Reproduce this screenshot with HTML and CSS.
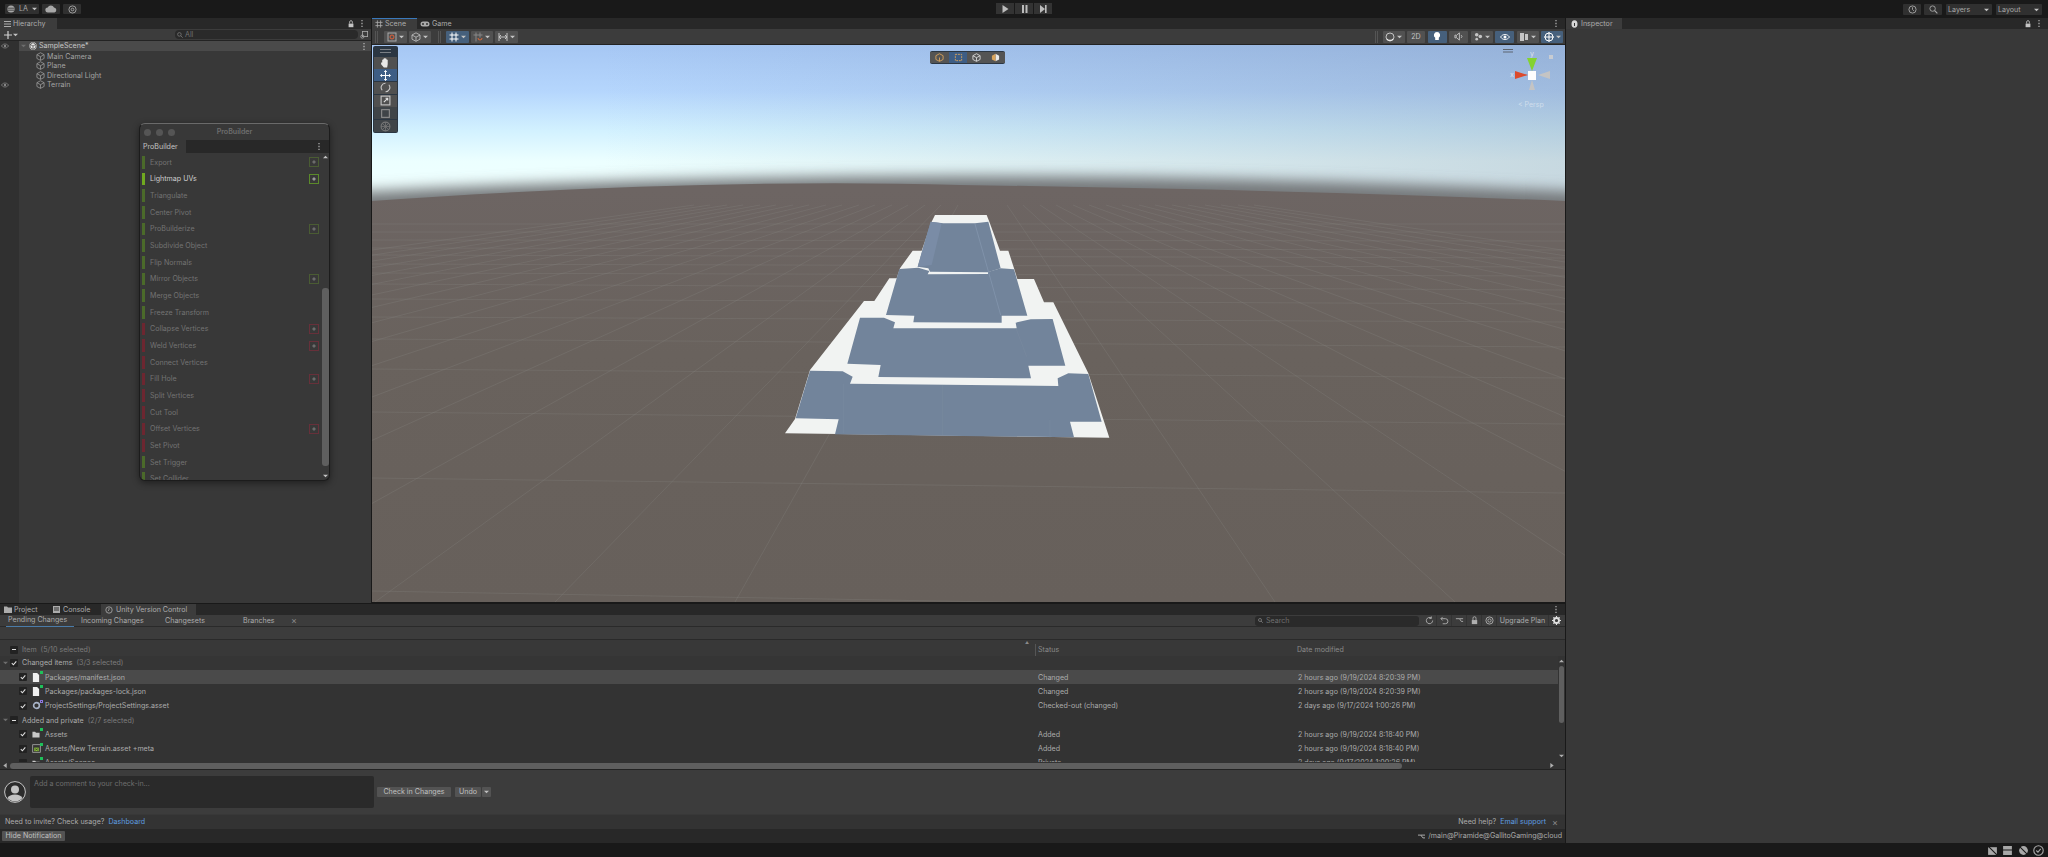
FILE: index.html
```html
<!DOCTYPE html>
<html lang="en">
<head>
    <meta charset="UTF-8">
    <title>SampleScene - Unity Editor</title>
    <link rel="stylesheet" href="styles.css">
</head>
<body>
    <svg class="defs" width="0" height="0">
        <symbol id="i-cube" viewBox="0 0 10 10"><path d="M5 .8 9 3v4.2L5 9.3 1 7.2V3zM1 3l4 2.2L9 3M5 5.2v4" fill="none" stroke="currentColor" stroke-width=".8"/></symbol>
        <symbol id="i-eye" viewBox="0 0 10 10"><path d="M.5 5C2 3 3.500 2.500 5 2.500S8 3 9.500 5C8 7 6.500 7.500 5 7.500S2 7 .5 5z" fill="none" stroke="currentColor" stroke-width=".9"/><circle cx="5" cy="5" r="1.500" fill="currentColor"/></symbol>
        <symbol id="i-lock" viewBox="0 0 10 10"><rect x="2" y="4.500" width="6" height="4.500" fill="currentColor"/><path d="M3.300 4.500V2.500a1.700 1.700 0 0 1 3.400 0v2" fill="none" stroke="currentColor"/></symbol>
        <symbol id="i-dots" viewBox="0 0 4 10"><path d="M2 1v1.400M2 4.300v1.400M2 7.600V9" stroke="currentColor" stroke-width="1.200"/></symbol>
        <symbol id="i-grid" viewBox="0 0 10 10"><path d="M3 .5v9M7 .5v9M.5 3h9M.5 7h9" stroke="currentColor" fill="none"/></symbol>
        <symbol id="i-check" viewBox="0 0 8 8"><path d="M1.800 4.200 3.400 5.800 6.300 2.300" fill="none" stroke="#e0e0e0" stroke-width="1.100"/></symbol>
        <symbol id="i-plus" viewBox="0 0 10 10"><path d="M5 2.800v4.400M2.800 5h4.400" stroke="currentColor"/></symbol>
        <symbol id="i-page" viewBox="0 0 9 10"><path d="M1 0h4.800L8 2.200V10H1z" fill="#f0f0f0"/></symbol>
        <symbol id="i-folder" viewBox="0 0 9 10"><path d="M.5 2h3l1 1h4v5.500h-8z" fill="#c8c8c8"/></symbol>
        <symbol id="i-gear" viewBox="0 0 10 10"><circle cx="5" cy="5" r="3.200" fill="none" stroke="#a9b4c8" stroke-width="1.800"/><circle cx="5" cy="5" r="1" fill="#333"/></symbol>
        <symbol id="i-terrain" viewBox="0 0 10 10"><rect x=".8" y=".8" width="8.400" height="8.400" fill="none" stroke="#b8b8b8" stroke-width=".8"/><rect x="2.500" y="4" width="5" height="4" fill="#8bbf3a"/><path d="m3.500 5 3 2M6.500 5l-3 2" stroke="#222" stroke-width=".6"/></symbol>
        <symbol id="i-caret" viewBox="0 0 6 4"><path d="M0 .5h6L3 3.500z" fill="currentColor"/></symbol>
    </svg>

    <header class="topbar">
        <div class="topbar-group">
            <button class="top-btn top-btn-account"><svg class="ico" width="8" height="8" viewBox="0 0 10 10"><circle cx="5" cy="5" r="4.500" fill="currentColor"/><path d="M1 4h8M1 6.500h8" stroke="#333"/></svg> LA <svg class="caret" width="5" height="4"><use href="#i-caret"/></svg></button>
            <button class="top-btn top-btn-cloud"><svg width="12" height="8" viewBox="0 0 12 8"><path d="M3 7.500a2.500 2.500 0 0 1-.3-5A3.400 3.400 0 0 1 9 2.600 2.500 2.500 0 0 1 9.500 7.500z" fill="currentColor"/></svg></button>
            <button class="top-btn top-btn-cloud"><svg width="9" height="9" viewBox="0 0 10 10"><circle cx="5" cy="5" r="4" fill="none" stroke="currentColor"/><circle cx="5" cy="5" r="1.500" fill="none" stroke="currentColor"/></svg></button>
        </div>
        <div class="play-group">
            <button class="play-btn"><svg width="7" height="8" viewBox="0 0 7 8"><path d="M.5 0 6.500 4 .5 8z" fill="currentColor"/></svg></button>
            <button class="play-btn"><svg width="7" height="8" viewBox="0 0 7 8"><path d="M1 0h2v8H1zM4.500 0h2v8h-2z" fill="currentColor"/></svg></button>
            <button class="play-btn"><svg width="7" height="8" viewBox="0 0 7 8"><path d="M0 0 5 4 0 8zM5 0h1.600v8H5z" fill="currentColor"/></svg></button>
        </div>
        <div class="topbar-group topbar-right">
            <button class="top-btn top-btn-square"><svg width="9" height="9" viewBox="0 0 10 10"><circle cx="5" cy="5" r="4" fill="none" stroke="currentColor"/><path d="M5 2.500V5l1.500 1.500" fill="none" stroke="currentColor"/></svg></button>
            <button class="top-btn top-btn-square"><svg width="9" height="9" viewBox="0 0 10 10"><circle cx="4" cy="4" r="3" fill="none" stroke="currentColor"/><path d="m6.300 6.300 3 3" stroke="currentColor" stroke-width="1.300"/></svg></button>
            <button class="top-btn top-btn-select">Layers <svg class="caret" width="5" height="4"><use href="#i-caret"/></svg></button>
            <button class="top-btn top-btn-select">Layout <svg class="caret" width="5" height="4"><use href="#i-caret"/></svg></button>
        </div>
    </header>

    <main class="workspace">
        <div class="left-col">
            <div class="upper">
                <!-- Hierarchy -->
                <section class="hierarchy">
                    <div class="tabstrip">
                        <div class="tab tab-active tab-hier"><svg width="7" height="6" viewBox="0 0 7 6"><path d="M0 .5h7M0 3h7M0 5.500h7" stroke="currentColor"/></svg> Hierarchy</div>
                        <div class="tab-tools"><svg width="8" height="8"><use href="#i-lock"/></svg><svg width="4" height="9"><use href="#i-dots"/></svg></div>
                    </div>
                    <div class="hier-toolbar">
                        <span class="hier-add"><svg width="8" height="8" viewBox="0 0 8 8"><path d="M4 0v8M0 4h8" stroke="#d0d0d0" stroke-width="1.200"/></svg><svg class="caret" width="5" height="4"><use href="#i-caret"/></svg></span>
                        <div class="hier-search"><svg width="6" height="6" viewBox="0 0 10 10"><circle cx="4" cy="4" r="3" fill="none" stroke="currentColor" stroke-width="1.500"/><path d="m6 6 3.500 3.500" stroke="currentColor" stroke-width="1.500"/></svg> All</div>
                        <span class="hier-find"><svg width="8" height="8" viewBox="0 0 10 10"><rect x="3" y=".5" width="6.500" height="6.500" fill="none" stroke="currentColor"/><circle cx="3" cy="7" r="2" fill="none" stroke="currentColor"/></svg></span>
                    </div>
                    <div class="hier-body">
                        <div class="hier-gutter">
                            <svg class="gutter-eye" width="8" height="8"><use href="#i-eye"/></svg>
                            <svg class="gutter-eye gutter-eye-off" width="8" height="8"><use href="#i-eye"/></svg>
                        </div>
                        <div class="hier-tree">
                            <div class="scene-row">
                                <svg class="fold" width="5" height="4"><use href="#i-caret"/></svg>
                                <svg width="8" height="8" viewBox="0 0 10 10"><circle cx="5" cy="5" r="4.600" fill="#e6e6e6"/><path d="M5 .8 8.600 3v4L5 9.200 1.400 7V3zM1.400 3 5 5l3.600-2M5 5v4" fill="none" stroke="#333" stroke-width=".8"/></svg>
                                <span>SampleScene*</span>
                                <svg class="scene-dots" width="4" height="9"><use href="#i-dots"/></svg>
                            </div>
                            <div class="tree-row"><svg width="9" height="9"><use href="#i-cube"/></svg>Main Camera</div>
                            <div class="tree-row"><svg width="9" height="9"><use href="#i-cube"/></svg>Plane</div>
                            <div class="tree-row"><svg width="9" height="9"><use href="#i-cube"/></svg>Directional Light</div>
                            <div class="tree-row"><svg width="9" height="9"><use href="#i-cube"/></svg>Terrain</div>
                        </div>
                    </div>

                    <!-- floating ProBuilder window -->
                    <div class="pb-window">
                        <div class="pb-title">
                            <span class="pb-light"></span><span class="pb-light"></span><span class="pb-light"></span>
                            <span class="pb-name">ProBuilder</span>
                        </div>
                        <div class="pb-tabs">
                            <div class="pb-tab">ProBuilder</div>
                            <svg width="4" height="9"><use href="#i-dots"/></svg>
                        </div>
                        <div class="pb-content">
                            <div class="pb-list">
                                <div class="pb-row pb-green">Export<span class="pb-more"><svg width="8" height="8"><use href="#i-plus"/></svg></span></div>
                                <div class="pb-row pb-green pb-on">Lightmap UVs<span class="pb-more"><svg width="8" height="8"><use href="#i-plus"/></svg></span></div>
                                <div class="pb-row pb-green">Triangulate</div>
                                <div class="pb-row pb-green">Center Pivot</div>
                                <div class="pb-row pb-green">ProBuilderize<span class="pb-more"><svg width="8" height="8"><use href="#i-plus"/></svg></span></div>
                                <div class="pb-row pb-green">Subdivide Object</div>
                                <div class="pb-row pb-green">Flip Normals</div>
                                <div class="pb-row pb-green">Mirror Objects<span class="pb-more"><svg width="8" height="8"><use href="#i-plus"/></svg></span></div>
                                <div class="pb-row pb-green">Merge Objects</div>
                                <div class="pb-row pb-green">Freeze Transform</div>
                                <div class="pb-row pb-red">Collapse Vertices<span class="pb-more"><svg width="8" height="8"><use href="#i-plus"/></svg></span></div>
                                <div class="pb-row pb-red">Weld Vertices<span class="pb-more"><svg width="8" height="8"><use href="#i-plus"/></svg></span></div>
                                <div class="pb-row pb-red">Connect Vertices</div>
                                <div class="pb-row pb-red">Fill Hole<span class="pb-more"><svg width="8" height="8"><use href="#i-plus"/></svg></span></div>
                                <div class="pb-row pb-red">Split Vertices</div>
                                <div class="pb-row pb-red">Cut Tool</div>
                                <div class="pb-row pb-red">Offset Vertices<span class="pb-more"><svg width="8" height="8"><use href="#i-plus"/></svg></span></div>
                                <div class="pb-row pb-red">Set Pivot</div>
                                <div class="pb-row pb-green">Set Trigger</div>
                                <div class="pb-row pb-green">Set Collider</div>
                            </div>
                            <div class="pb-scroll">
                                <svg class="pb-arrow" width="5" height="4"><use href="#i-caret"/></svg>
                                <div class="pb-thumb"></div>
                                <svg class="pb-arrow-down" width="5" height="4"><use href="#i-caret"/></svg>
                            </div>
                        </div>
                    </div>
                </section>

                <!-- Scene view -->
                <section class="scene">
                    <div class="tabstrip">
                        <div class="tab tab-active tab-scene"><svg width="8" height="8"><use href="#i-grid"/></svg> Scene</div>
                        <div class="tab tab-game"><svg width="10" height="6" viewBox="0 0 10 6"><rect x=".5" y=".5" width="9" height="5" rx="2.500" fill="currentColor"/><circle cx="3" cy="3" r="1" fill="#333"/><circle cx="7" cy="3" r="1" fill="#333"/></svg> Game</div>
                        <div class="tab-tools"><svg width="4" height="9"><use href="#i-dots"/></svg></div>
                    </div>
                    <div class="scene-toolbar">
                        <div class="tool-group">
                            <span class="grip"></span>
                            <span class="tb-btn tb-wide"><svg width="10" height="10" viewBox="0 0 10 10"><rect x="1" y="1" width="8" height="8" fill="none" stroke="#aaa"/><circle cx="5" cy="5" r="2" fill="none" stroke="#e0603a"/></svg><svg class="caret" width="5" height="4"><use href="#i-caret"/></svg></span>
                            <span class="tb-btn tb-wide"><svg width="10" height="10"><use href="#i-cube"/></svg><svg class="caret" width="5" height="4"><use href="#i-caret"/></svg></span>
                            <span class="grip grip-mid"></span>
                            <span class="tb-btn tb-wide tb-on"><svg width="10" height="10"><use href="#i-grid"/></svg><svg class="caret" width="5" height="4"><use href="#i-caret"/></svg></span>
                            <span class="tb-btn tb-wide"><svg width="10" height="10" viewBox="0 0 10 10"><path d="M3 .5v9M7 .5v5M.5 3h9" stroke="#888" fill="none"/><path d="M5 6a2 2 0 0 0 4 0" stroke="#d8693a" fill="none"/></svg><svg class="caret" width="5" height="4"><use href="#i-caret"/></svg></span>
                            <span class="tb-btn tb-wide"><svg width="10" height="10" viewBox="0 0 10 10"><path d="M1 1v8M9 1v8M1 5h8M3 3l-2 2 2 2M7 3l2 2-2 2" stroke="currentColor" fill="none"/></svg><svg class="caret" width="5" height="4"><use href="#i-caret"/></svg></span>
                        </div>
                        <div class="tool-group tool-group-right">
                            <span class="grip"></span>
                            <span class="tb-btn tb-w22"><svg width="10" height="10" viewBox="0 0 10 10"><circle cx="5" cy="5" r="4" fill="none" stroke="currentColor"/><path d="M2 7a4 4 0 0 0 6 0" fill="none" stroke="#fff"/></svg><svg class="caret" width="5" height="4"><use href="#i-caret"/></svg></span>
                            <span class="tb-btn tb-w18">2D</span>
                            <span class="tb-btn tb-w19 tb-on"><svg width="8" height="10" viewBox="0 0 8 10"><path d="M4 0a3.200 3.200 0 0 1 1.800 5.800V8H2.200V5.800A3.200 3.200 0 0 1 4 0z" fill="#fff"/></svg></span>
                            <span class="tb-btn tb-w19"><svg width="9" height="9" viewBox="0 0 10 10"><path d="M1 3.500h1.500v3H1zM3 3.500 6 1v8L3 6.500M8 3.500a2 2 0 0 1 0 3" fill="none" stroke="currentColor"/></svg></span>
                            <span class="tb-btn tb-w22"><svg width="9" height="9" viewBox="0 0 10 10"><circle cx="3" cy="3" r="2" fill="currentColor"/><circle cx="7" cy="5" r="2" fill="currentColor"/><circle cx="3" cy="8" r="1.500" fill="currentColor"/></svg><svg class="caret" width="5" height="4"><use href="#i-caret"/></svg></span>
                            <span class="tb-btn tb-w19 tb-on"><svg width="10" height="10"><use href="#i-eye"/></svg></span>
                            <span class="tb-btn tb-w22"><svg width="9" height="8" viewBox="0 0 9 8"><rect width="4" height="8" fill="currentColor"/><rect x="5" y="1" width="3" height="6" fill="currentColor"/></svg><svg class="caret" width="5" height="4"><use href="#i-caret"/></svg></span>
                            <span class="tb-btn tb-w22 tb-on"><svg width="10" height="10" viewBox="0 0 10 10"><circle cx="5" cy="5" r="4" fill="none" stroke="#fff"/><path d="M5 0v10M0 5h10" stroke="#fff"/></svg><svg class="caret" width="5" height="4"><use href="#i-caret"/></svg></span>
                        </div>
                    </div>
                    <div class="viewport">
                        <svg class="world" viewBox="372 45 1193 557" width="1193" height="557">
                            <defs>
                                <linearGradient id="sky" gradientUnits="userSpaceOnUse" x1="0" y1="45" x2="0" y2="200">
                                    <stop offset="0" stop-color="#a6c7f4"/>
                                    <stop offset=".3" stop-color="#b5d6fd"/>
                                    <stop offset=".55" stop-color="#d2f1ff"/>
                                    <stop offset=".75" stop-color="#ecffff"/>
                                    <stop offset="1" stop-color="#f0ffff"/>
                                </linearGradient>
                                <linearGradient id="skyshade" gradientUnits="userSpaceOnUse" x1="600" y1="0" x2="1565" y2="0">
                                    <stop offset="0" stop-color="#6f7f99" stop-opacity="0"/>
                                    <stop offset="1" stop-color="#6f7f99" stop-opacity=".3"/>
                                </linearGradient>
                                <linearGradient id="ground" gradientUnits="userSpaceOnUse" x1="0" y1="190" x2="0" y2="602">
                                    <stop offset="0" stop-color="#6d6563"/>
                                    <stop offset=".4" stop-color="#69625d"/>
                                    <stop offset="1" stop-color="#67605b"/>
                                </linearGradient>
                                <filter id="haze" filterUnits="userSpaceOnUse" x="300" y="100" width="1400" height="200">
                                    <feGaussianBlur stdDeviation="7"/>
                                </filter>
                            </defs>
                            <rect x="372" y="45" width="1193" height="557" fill="url(#sky)"/>
                            <rect x="372" y="45" width="1193" height="200" fill="url(#skyshade)"/>
                            <path d="M300 195Q960 157 1640 195V260H300z" fill="#74787a" filter="url(#haze)"/>
                            <path d="M372 201Q700 178 960 185 1300 190 1565 201V602H372z" fill="url(#ground)"/>
                            <!-- ground grid -->
                            <g class="grid-lines">
                                <path d="M925 205 375 602M908 205 195 602M892 205 15 602M875 205-165 602M859 205-345 602M842 205-525 602M826 205-705 602M809 205-885 602M793 205-1065 602M776 205-1245 602M760 205-1425 602M743 205-1605 602M727 205-1785 602M710 205-1965 602M694 205-2145 602"/>
                                <path d="M941 205 555 602M958 205 735 602M1007 205 1275 602M1023 205 1455 602M1040 205 1635 602M1056 205 1815 602M1073 205 1995 602M1089 205 2175 602M1106 205 2355 602M1122 205 2535 602M1139 205 2715 602M1155 205 2895 602M1172 205 3075 602M1188 205 3255 602M1205 205 3435 602M1221 205 3615 602M1238 205 3795 602M1254 205 3975 602"/>
                                <path d="M372 591 1565 612M372 478 1565 493M372 412 1565 424M372 369 1565 378M372 339 1565 347M372 317 1565 322M372 299 1565 304M372 284 1565 290M372 273 1565 276M372 264 1565 267M372 255 1565 258M372 248 1565 250M372 240 1565 241M372 232 1565 232M372 224 1565 224"/>
                            </g>
                            <!-- terrain steps -->
                            <g transform="translate(760 200) scale(.33333)">
                                <polygon class="m-white" points="525,45 680,45 688,65 720,152 745,152 762,205 772,237 822,237 852,307 880,307 985,520 1048,713 75,700 105,657 150,510 312,303 343,303 388,235 410,235 420,205 458,152 485,152 515,65"/>
                                <polygon class="m-blue" points="150,512 248,514 278,530 270,551 895,558 893,535 925,520 985,522 1025,665 930,665 942,712 225,703 236,658 107,655"/>
                                <polygon class="m-blue" points="300,353 372,353 405,367 400,385 770,385 767,368 812,358 878,357 916,497 805,497 813,535 355,531 362,495 262,491"/>
                                <polygon class="m-blue" points="418,207 475,203 508,213 503,223 684,222 684,216 722,205 762,208 802,347 725,347 725,368 460,367 463,347 378,345"/>
                                <polygon class="m-blue" points="512,65 550,70 645,70 685,65 722,205 684,217 510,215 505,205 473,200"/>
                                <polygon class="m-light" points="512,65 545,70 515,195 473,200"/>
                                <path class="m-seam" d="M645 72 722 345"/>
                                <path class="m-seam-faint" d="M768 385 800 470M250 551V700M548 555V705M870 660V712"/>
                            </g>
                            <!-- scene gizmo -->
                            <g class="gizmo">
                                <path class="giz-handle" d="M1503 49.500h10M1503 52h10"/>
                                <polygon points="1527,58 1537,58 1532,71" fill="#84d22f"/>
                                <polygon points="1515,71 1515,79 1528,75" fill="#dc4a2c"/>
                                <polygon points="1550,71 1550,79 1538,75" fill="#c4c4c4"/>
                                <polygon points="1529,90 1535,90 1532,80" fill="#c4c4c4"/>
                                <rect x="1528" y="71" width="8" height="9" fill="#fdfdfd"/>
                                <rect x="1549" y="55" width="4" height="4" fill="#c8ccd2"/>
                            </g>
                        </svg>
                        <div class="gizmo-label gizmo-y">y</div>
                        <div class="gizmo-label gizmo-x">x</div>
                        <div class="gizmo-label gizmo-persp">&lt; Persp</div>

                        <div class="tools-overlay">
                            <div class="overlay-grip"></div>
                            <div class="tool-btn"><svg width="11" height="11" viewBox="0 0 10 10"><path d="M2 5V2.500h1V4V1.500h1V4V1h1v3V1.500h1V4V2.500h1V6.500L6.500 9.500h-3L1 6.500V5z" fill="#e8e8e8"/></svg></div>
                            <div class="tool-btn tool-on"><svg width="11" height="11" viewBox="0 0 10 10"><path d="M5 .5v9M.5 5h9M3.800 1.800 5 .5l1.200 1.300M3.800 8.200 5 9.500l1.200-1.300M1.800 3.800.5 5l1.300 1.200M8.200 3.800 9.500 5 8.200 6.200" fill="none" stroke="#fff" stroke-width=".9"/></svg></div>
                            <div class="tool-btn"><svg width="11" height="11" viewBox="0 0 10 10"><path d="M2 7.500A3.800 3.800 0 0 1 5 1.200M8 2.500A3.800 3.800 0 0 1 5 8.800" fill="none" stroke="#c8c8c8"/></svg></div>
                            <div class="tool-btn"><svg width="11" height="11" viewBox="0 0 10 10"><rect x="1" y="1" width="8" height="8" fill="none" stroke="#c8c8c8"/><path d="M3.500 6.500 7 3M5 3h2v2" fill="none" stroke="#e0e0e0"/></svg></div>
                            <div class="tool-btn tool-off"><svg width="11" height="11" viewBox="0 0 10 10"><rect x="1.500" y="1.500" width="7" height="7" fill="none" stroke="#8e8e8e"/></svg></div>
                            <div class="tool-btn tool-off"><svg width="11" height="11" viewBox="0 0 10 10"><circle cx="5" cy="5" r="4" fill="none" stroke="#777"/><path d="M1 5h8M5 1v8M2 2l6 6M8 2 2 8" stroke="#777" stroke-width=".7"/></svg></div>
                        </div>

                        <div class="orient-overlay">
                            <div class="orient-btn"><svg width="9" height="9" viewBox="0 0 10 10"><path d="M5 .8 9 3v4.200L5 9.300 1 7.200V3zM5 5v4" fill="none" stroke="#d9a45c"/></svg></div>
                            <div class="orient-btn orient-on"><svg width="9" height="9" viewBox="0 0 10 10"><rect x="1.500" y="1.500" width="7" height="7" fill="none" stroke="#d9a45c" stroke-dasharray="2 1"/></svg></div>
                            <div class="orient-btn"><svg width="9" height="9" viewBox="0 0 10 10"><path d="M5 .8 9 3v4.200L5 9.300 1 7.200V3zM1 3l4 2.200L9 3M5 5v4" fill="none" stroke="#d8d8d8"/></svg></div>
                            <div class="orient-btn"><svg width="9" height="9" viewBox="0 0 10 10"><path d="M5 .8 9 3v4.200L5 9.300z" fill="#e8e8e8"/><path d="M5 .8 1 3v4.200l4 2.100z" fill="#d9a45c"/></svg></div>
                        </div>
                    </div>
                </section>
            </div>

            <!-- Version control panel -->
            <section class="vc-panel">
                <div class="tabstrip">
                    <div class="tab tab-project"><svg width="8" height="7" viewBox="0 0 8 7"><path d="M0 .5h3l1 1h4V7H0z" fill="currentColor"/></svg> Project</div>
                    <div class="tab tab-console"><svg width="7" height="7" viewBox="0 0 7 7"><rect width="7" height="7" fill="currentColor"/><path d="M1 2h5M1 4h5" stroke="#333"/></svg> Console</div>
                    <div class="tab tab-active tab-uvc"><svg width="8" height="8" viewBox="0 0 10 10"><circle cx="5" cy="5" r="4" fill="none" stroke="currentColor"/><path d="M5 2.500V5L3.500 6.500" fill="none" stroke="currentColor"/></svg> Unity Version Control</div>
                    <div class="tab-tools"><svg width="4" height="9"><use href="#i-dots"/></svg></div>
                </div>
                <div class="vc-subtabs">
                    <div class="subtab subtab-active">Pending Changes</div>
                    <div class="subtab subtab-incoming">Incoming Changes</div>
                    <div class="subtab subtab-changesets">Changesets</div>
                    <div class="subtab subtab-branches">Branches</div>
                    <div class="subtab-close">&times;</div>
                    <div class="vc-tools">
                        <div class="vc-search"><svg width="5" height="5" viewBox="0 0 10 10"><circle cx="4" cy="4" r="3" fill="none" stroke="currentColor" stroke-width="2"/><path d="m6 6 3.500 3.500" stroke="currentColor" stroke-width="2"/></svg> Search</div>
                        <span class="vc-icon"><svg width="9" height="9" viewBox="0 0 10 10"><path d="M8.500 5A3.500 3.500 0 1 1 7 2.200M7 .5v2.200H4.800" fill="none" stroke="currentColor"/></svg></span>
                        <span class="vc-icon"><svg width="9" height="9" viewBox="0 0 10 10"><path d="M3 1 1 3l2 2M1 3h5a2.800 2.800 0 0 1 0 5.600H3" fill="none" stroke="currentColor"/></svg></span>
                        <span class="vc-icon"><svg width="9" height="9" viewBox="0 0 10 10"><path d="M1 3h4l2 3h2M5 3h4" fill="none" stroke="currentColor"/></svg></span>
                        <span class="vc-icon"><svg width="9" height="9"><use href="#i-lock"/></svg></span>
                        <span class="vc-icon"><svg width="9" height="9" viewBox="0 0 10 10"><circle cx="5" cy="5" r="4" fill="none" stroke="currentColor"/><circle cx="5" cy="5" r="1.800" fill="none" stroke="currentColor"/></svg></span>
                        <span class="vc-upgrade">Upgrade Plan</span>
                        <span class="vc-icon vc-gear"><svg width="9" height="9" viewBox="0 0 10 10"><circle cx="5" cy="5" r="2.800" fill="none" stroke="#e0e0e0" stroke-width="2"/><path d="M5 0v2M5 8v2M0 5h2M8 5h2M1.500 1.500 3 3M7 7l1.500 1.500M8.500 1.500 7 3M3 7 1.500 8.500" stroke="#e0e0e0" stroke-width="1.200"/></svg></span>
                    </div>
                </div>
                <div class="vc-band"></div>
                <div class="vc-head">
                    <div class="cell-name"><span class="cb cb-head"><i class="cb-dash"></i></span><span class="dim">Item&nbsp; (5/10 selected)</span></div>
                    <div class="cell-status"><span class="sort-mark">&#9650;</span>Status</div>
                    <div class="cell-date">Date modified</div>
                </div>
                <div class="vc-table">
                    <div class="vc-rows">
                        <div class="vc-row vc-group">
                            <div class="cell-name"><svg class="fold" width="5" height="4"><use href="#i-caret"/></svg><span class="cb"><svg width="8" height="8"><use href="#i-check"/></svg></span><span>Changed items</span><span class="dim">&nbsp; (3/3 selected)</span></div>
                        </div>
                        <div class="vc-row vc-item vc-selected">
                            <div class="cell-name"><span class="cb"><svg width="8" height="8"><use href="#i-check"/></svg></span><span class="file-ico"><svg width="8" height="9"><use href="#i-page"/></svg><i class="badge"></i></span>Packages/manifest.json</div>
                            <div class="cell-status">Changed</div>
                            <div class="cell-date">2 hours ago (9/19/2024 8:20:39 PM)</div>
                        </div>
                        <div class="vc-row vc-item">
                            <div class="cell-name"><span class="cb"><svg width="8" height="8"><use href="#i-check"/></svg></span><span class="file-ico"><svg width="8" height="9"><use href="#i-page"/></svg><i class="badge"></i></span>Packages/packages-lock.json</div>
                            <div class="cell-status">Changed</div>
                            <div class="cell-date">2 hours ago (9/19/2024 8:20:39 PM)</div>
                        </div>
                        <div class="vc-row vc-item">
                            <div class="cell-name"><span class="cb"><svg width="8" height="8"><use href="#i-check"/></svg></span><span class="file-ico"><svg width="9" height="9"><use href="#i-gear"/></svg><i class="badge badge-purple"></i></span>ProjectSettings/ProjectSettings.asset</div>
                            <div class="cell-status">Checked-out (changed)</div>
                            <div class="cell-date">2 days ago (9/17/2024 1:00:26 PM)</div>
                        </div>
                        <div class="vc-row vc-group vc-group-plain">
                            <div class="cell-name"><svg class="fold" width="5" height="4"><use href="#i-caret"/></svg><span class="cb"><i class="cb-dash"></i></span><span>Added and private</span><span class="dim">&nbsp; (2/7 selected)</span></div>
                        </div>
                        <div class="vc-row vc-item">
                            <div class="cell-name"><span class="cb"><svg width="8" height="8"><use href="#i-check"/></svg></span><span class="file-ico"><svg width="8" height="9"><use href="#i-folder"/></svg><i class="badge"></i></span>Assets</div>
                            <div class="cell-status">Added</div>
                            <div class="cell-date">2 hours ago (9/19/2024 8:18:40 PM)</div>
                        </div>
                        <div class="vc-row vc-item">
                            <div class="cell-name"><span class="cb"><svg width="8" height="8"><use href="#i-check"/></svg></span><span class="file-ico"><svg width="9" height="9"><use href="#i-terrain"/></svg><i class="badge"></i></span>Assets/New Terrain.asset +meta</div>
                            <div class="cell-status">Added</div>
                            <div class="cell-date">2 hours ago (9/19/2024 8:18:40 PM)</div>
                        </div>
                        <div class="vc-row vc-item">
                            <div class="cell-name"><span class="cb"></span><span class="file-ico"><svg width="8" height="9"><use href="#i-folder"/></svg><i class="badge"></i></span>Assets/Scenes</div>
                            <div class="cell-status">Private</div>
                            <div class="cell-date">2 days ago (9/17/2024 1:00:26 PM)</div>
                        </div>
                    </div>
                    <div class="vscroll">
                        <svg class="vs-up" width="5" height="4"><use href="#i-caret"/></svg>
                        <div class="vs-thumb"></div>
                        <svg class="vs-down" width="5" height="4"><use href="#i-caret"/></svg>
                    </div>
                </div>
                <div class="hscroll">
                    <svg class="hs-left" width="4" height="5" viewBox="0 0 4 6"><path d="M4 0v6L0 3z" fill="currentColor"/></svg>
                    <div class="hs-thumb"></div>
                    <svg class="hs-right" width="4" height="5" viewBox="0 0 4 6"><path d="M0 0v6l4-3z" fill="currentColor"/></svg>
                </div>
                <div class="vc-comment">
                    <svg class="avatar" width="22" height="22" viewBox="0 0 22 22"><circle cx="11" cy="11" r="10.400" fill="#2c2c2c" stroke="#c4c4c4"/><circle cx="11" cy="8.500" r="4" fill="#c4c4c4"/><path d="M3.500 17a8 5.500 0 0 1 15 0 10 10 0 0 1-15 0z" fill="#c4c4c4"/></svg>
                    <div class="comment-box">Add a comment to your check-in...</div>
                    <button class="vc-btn vc-btn-checkin">Check in Changes</button>
                    <button class="vc-btn vc-btn-undo">Undo</button>
                    <button class="vc-btn vc-btn-more"><svg width="5" height="4"><use href="#i-caret"/></svg></button>
                </div>
                <div class="vc-notice">
                    <span>Need to invite? Check usage?</span>
                    <span class="link link-dash">Dashboard</span>
                    <span class="notice-right">Need help?</span>
                    <span class="link link-mail">Email support</span>
                    <span class="notice-close">&times;</span>
                </div>
                <div class="vc-footer">
                    <button class="vc-btn vc-btn-hide">Hide Notification</button>
                    <span class="branch"><svg width="7" height="7" viewBox="0 0 10 10"><path d="M0 3h4l3 4h3M4 3h6" fill="none" stroke="currentColor" stroke-width="1.400"/></svg> /main@Piramide@GallitoGaming@cloud</span>
                </div>
            </section>
        </div>

        <!-- Inspector -->
        <section class="inspector">
            <div class="tabstrip">
                <div class="tab tab-active tab-inspector"><svg width="7" height="8" viewBox="0 0 7 8"><ellipse cx="3.500" cy="4" rx="3" ry="3.800" fill="#d8d8d8"/><rect x="3" y="3" width="1" height="3" fill="#333"/></svg> Inspector</div>
                <div class="tab-tools"><svg width="8" height="8"><use href="#i-lock"/></svg><svg width="4" height="9"><use href="#i-dots"/></svg></div>
            </div>
        </section>
    </main>

    <footer class="statusbar">
        <svg width="11" height="11" viewBox="0 0 10 10"><path d="M1 2h8v7H1z" fill="#a8a8a8"/><path d="m1 1 8 8" stroke="#191919"/></svg>
        <svg width="11" height="11" viewBox="0 0 10 10"><path d="M1 1h8v3H1zM1 5h8v4H1z" fill="#a8a8a8"/></svg>
        <svg width="11" height="11" viewBox="0 0 10 10"><circle cx="5" cy="5" r="4" fill="#a8a8a8"/><path d="m1 1 8 8" stroke="#191919"/></svg>
        <svg width="11" height="11" viewBox="0 0 10 10"><circle cx="5" cy="5" r="4.300" fill="none" stroke="#a8a8a8"/><path d="m3 5 1.500 1.500L7 3.500" fill="none" stroke="#a8a8a8"/></svg>
    </footer>
</body>
</html>
```

FILE: styles.css
```css
/* Unity editor layout, dark theme */
* {
    margin: 0;
    padding: 0;
    box-sizing: border-box;
}

html, body {
    height: 857px;
    overflow: hidden;
}

body {
    display: flex;
    flex-direction: column;
    background-color: #191919;
    color: #acacac;
    font-family: 'Inter', 'Roboto', sans-serif;
    font-size: 7.1px;
    line-height: 1;
}

button {
    font: inherit;
    color: inherit;
    border: none;
}

svg {
    display: block;
    flex: none;
}

.defs {
    position: absolute;
}

.caret {
    color: #c4c4c4;
}

/* top toolbar */
.topbar {
    height: 18px;
    flex: none;
    display: flex;
    justify-content: space-between;
    align-items: flex-start;
    padding: 4px 6px 0 5px;
    position: relative;
}

.topbar-group {
    display: flex;
    gap: 3px;
}

.top-btn {
    height: 10px;
    display: flex;
    align-items: center;
    justify-content: center;
    gap: 4px;
    background-color: #303030;
    color: #a8a8a8;
    border-radius: 1px;
}

.top-btn-account {
    width: 34px;
}

.top-btn-cloud {
    width: 18px;
}

.top-btn-square {
    width: 18px;
    height: 11px;
}

.top-btn-select {
    width: 46px;
    height: 11px;
    justify-content: space-between;
    padding: 0 3px 0 2px;
    margin-left: 1px;
}

.topbar-right {
    gap: 3px;
}

.play-group {
    position: absolute;
    left: 996px;
    top: 3px;
    display: flex;
    gap: 1px;
}

.play-btn {
    width: 18px;
    height: 11px;
    display: flex;
    align-items: center;
    justify-content: center;
    background-color: #333;
    color: #bcbcbc;
}

/* panels */
.workspace {
    flex: 1;
    display: flex;
    min-height: 0;
}

.left-col {
    width: 1565px;
    display: flex;
    flex-direction: column;
    gap: 1px;
}

.upper {
    height: 585px;
    display: flex;
    gap: 1px;
}

.tabstrip {
    height: 11px;
    flex: none;
    display: flex;
    align-items: stretch;
    background-color: #282828;
    position: relative;
}

.tab {
    display: flex;
    align-items: center;
    gap: 2px;
    padding-left: 4px;
    color: #acacac;
}

.tab-active {
    background-color: #3c3c3c;
}

.tab-tools {
    margin-left: auto;
    display: flex;
    align-items: center;
    gap: 5px;
    padding-right: 7px;
    color: #c4c4c4;
}

/* hierarchy */
.hierarchy {
    width: 371px;
    display: flex;
    flex-direction: column;
    background-color: #383838;
    position: relative;
}

.tab-hier {
    width: 57px;
}

.hier-toolbar {
    height: 12px;
    flex: none;
    display: flex;
    align-items: center;
    background-color: #3c3c3c;
    border-bottom: 1px solid #232323;
    padding-left: 4px;
}

.hier-add {
    display: flex;
    align-items: center;
    gap: 1px;
    width: 171px;
}

.hier-search {
    width: 183px;
    height: 9px;
    display: flex;
    align-items: center;
    gap: 2px;
    padding-left: 2px;
    background-color: #2a2a2a;
    border-radius: 4px;
    color: #707070;
}

.hier-find {
    margin-left: 2px;
    color: #acacac;
}

.hier-body {
    flex: 1;
    display: flex;
}

.hier-gutter {
    width: 19px;
    background-color: #303030;
    position: relative;
    color: #888;
}

.gutter-eye {
    position: absolute;
    left: 1px;
    top: 1px;
}

.gutter-eye-off {
    top: 40px;
}

.hier-tree {
    flex: 1;
}

.scene-row {
    height: 10px;
    display: flex;
    align-items: center;
    gap: 2px;
    padding-left: 2px;
    background-color: #4a4a4a;
    color: #c8c8c8;
    margin-left: -1px;
    margin-bottom: .5px;
}

.fold {
    color: #6e6e6e;
}

.scene-row .fold {
    margin-right: 1px;
    margin-left: 1px;
}

.scene-dots {
    margin-left: auto;
    margin-right: 5px;
}

.tree-row {
    height: 9.5px;
    display: flex;
    align-items: center;
    gap: 2px;
    padding-left: 17px;
    color: #a4a4a4;
    white-space: nowrap;
}

/* probuilder window */
.pb-window {
    position: absolute;
    left: 139px;
    top: 105px;
    width: 191px;
    height: 358px;
    display: flex;
    flex-direction: column;
    background-color: #383838;
    border: 1px solid #1c1c1c;
    border-top-color: #6a6a6a;
    border-radius: 6px;
    overflow: hidden;
    box-shadow: 0 2px 7px rgba(0, 0, 0, .45);
}

.pb-title {
    height: 16px;
    flex: none;
    display: flex;
    align-items: center;
    gap: 5px;
    padding-left: 4px;
    position: relative;
}

.pb-light {
    width: 7px;
    height: 7px;
    border-radius: 50%;
    background-color: #555;
}

.pb-name {
    position: absolute;
    left: 0;
    right: 0;
    text-align: center;
    font-weight: 600;
    color: #6e6e6e;
}

.pb-tabs {
    height: 13px;
    flex: none;
    display: flex;
    align-items: center;
    justify-content: space-between;
    padding-right: 8px;
    background-color: #282828;
    color: #c4c4c4;
}

.pb-tab {
    width: 46px;
    height: 13px;
    display: flex;
    align-items: center;
    padding-left: 3px;
    background-color: #383838;
}

.pb-content {
    flex: 1;
    min-height: 0;
    display: flex;
}

.pb-list {
    flex: 1;
    padding-top: 1px;
    overflow: hidden;
}

.pb-row {
    height: 16.67px;
    display: flex;
    align-items: center;
    padding: 0 3px 0 10px;
    color: #737373;
    position: relative;
    white-space: nowrap;
}

.pb-row::before {
    content: "";
    position: absolute;
    left: 2px;
    top: 2px;
    bottom: 2px;
    width: 3px;
}

.pb-green::before {
    background-color: #4b6a2a;
}

.pb-red::before {
    background-color: #6d2630;
}

.pb-on {
    color: #cfcfcf;
}

.pb-on::before {
    background-color: #70a820;
}

.pb-more {
    margin-left: auto;
    width: 10px;
    height: 10px;
    display: flex;
    align-items: center;
    justify-content: center;
    border: 1px solid #4a5c33;
    color: #8a8a8a;
}

.pb-red .pb-more {
    border-color: #67303a;
}

.pb-on .pb-more {
    border-color: #5b8a2a;
    color: #d0d0d0;
}

.pb-scroll {
    width: 7px;
    flex: none;
    position: relative;
    color: #c4c4c4;
    margin-right: 0;
}

.pb-arrow {
    position: absolute;
    left: 1px;
    top: 2px;
    transform: rotate(180deg);
}

.pb-arrow-down {
    position: absolute;
    left: 1px;
    bottom: 2px;
}

.pb-thumb {
    position: absolute;
    left: 0;
    right: 0;
    top: 135px;
    height: 178px;
    background-color: #5f5f5f;
    border-radius: 3px;
}

/* scene view */
.scene {
    flex: 1;
    min-width: 0;
    display: flex;
    flex-direction: column;
}

.tab-scene {
    width: 45px;
    padding-left: 3px;
    border-top: 1px solid #3a79bb;
    gap: 2px;
}

.tab-game {
    padding-left: 3px;
    gap: 2px;
}

.scene-toolbar {
    height: 16px;
    flex: none;
    display: flex;
    justify-content: space-between;
    align-items: center;
    background-color: #3c3c3c;
    border-bottom: 1px solid #232323;
    padding: 0 2px 0 3px;
}

.tool-group {
    display: flex;
    align-items: center;
    gap: 2px;
}

.tool-group-right {
    gap: 2.500px;
}

.grip {
    width: 3px;
    height: 12px;
    border-left: 1px solid #555;
    border-right: 1px solid #555;
    margin-right: 4px;
}

.grip-mid {
    margin: 0 3px 0 5px;
}

.tool-group-right .grip {
    margin-right: 2px;
}

.tb-btn {
    height: 12px;
    display: flex;
    align-items: center;
    justify-content: center;
    gap: 2px;
    background-color: #515151;
    color: #c4c4c4;
    border-radius: 1px;
}

.tb-wide {
    width: 22.500px;
}

.tb-w22 {
    width: 22px;
}

.tb-w18 {
    width: 18px;
}

.tb-w19 {
    width: 19px;
}

.tb-on {
    background-color: #46607c;
    color: #fff;
}

.viewport {
    flex: 1;
    position: relative;
    overflow: hidden;
}

.world {
    position: absolute;
    left: 0;
    top: 0;
}

.grid-lines path {
    fill: none;
    stroke: #8a8a88;
    stroke-width: .7;
    opacity: .35;
}

.m-white {
    fill: #f1f3f2;
}

.m-blue {
    fill: #72849b;
}

.m-light {
    fill: #7a8ca6;
}

.m-seam {
    fill: none;
    stroke: #8799b0;
    stroke-width: 2;
}

.m-seam-faint {
    fill: none;
    stroke: #7b8ba0;
    stroke-width: 1.500;
}

.giz-handle {
    stroke: #5c6470;
    fill: none;
}

.gizmo-label {
    position: absolute;
    font-size: 7px;
    color: rgba(240, 240, 240, .8);
}

.gizmo-y {
    left: 1158px;
    top: 5px;
}

.gizmo-x {
    left: 1138px;
    top: 26px;
}

.gizmo-persp {
    left: 1146px;
    top: 56px;
    color: rgba(235, 240, 245, .6);
}

.tools-overlay {
    position: absolute;
    left: 1px;
    top: 1px;
    width: 25px;
    height: 87px;
    display: flex;
    flex-direction: column;
    gap: .5px;
    background-color: #2b3642;
    border-radius: 2px;
    padding: 0 1px;
}

.overlay-grip {
    height: 7px;
    flex: none;
    margin: 3px 6px 0;
    border-top: 1px solid #7a7f85;
    position: relative;
}

.overlay-grip::after {
    content: "";
    position: absolute;
    top: 2px;
    left: 0;
    right: 0;
    border-top: 1px solid #7a7f85;
}

.tool-btn {
    height: 12.200px;
    flex: none;
    display: flex;
    align-items: center;
    justify-content: center;
    background-color: #505050;
}

.tool-on {
    background-color: #3d5d85;
}

.tool-off {
    background-color: #3f4448;
}

.orient-overlay {
    position: absolute;
    left: 558px;
    top: 6px;
    display: flex;
    background-color: #2b3642;
    padding: 1px 0;
    border-radius: 2px;
}

.orient-btn {
    width: 18.700px;
    height: 11px;
    display: flex;
    align-items: center;
    justify-content: center;
    background-color: #545454;
}

.orient-on {
    background-color: #3d5d85;
}

/* version control */
.vc-panel {
    flex: 1;
    display: flex;
    flex-direction: column;
    background-color: #383838;
}

.tab-project {
    width: 50px;
    padding-left: 4px;
    gap: 2px;
}

.tab-console {
    width: 51px;
    gap: 3px;
    padding-left: 3px;
}

.tab-uvc {
    width: 95px;
    gap: 3px;
    padding-left: 4px;
}

.vc-subtabs {
    height: 12px;
    flex: none;
    display: flex;
    align-items: center;
    background-color: #3c3c3c;
    border-bottom: 1px solid #2a2a2a;
    position: relative;
}

.subtab {
    white-space: nowrap;
}

.subtab-active {
    height: 12px;
    width: 68px;
    margin-left: 6px;
    padding-left: 2px;
    display: flex;
    align-items: center;
    border-bottom: 1px solid #4a7ba8;
}

.subtab-incoming {
    margin-left: 7px;
    width: 84px;
}

.subtab-changesets {
    width: 78px;
}

.subtab-branches {
    width: 48px;
}

.subtab-close {
    color: #8a8a8a;
    font-size: 9px;
}

.vc-tools {
    margin-left: auto;
    display: flex;
    align-items: center;
    padding-right: 2px;
}

.vc-search {
    width: 164px;
    height: 10px;
    display: flex;
    align-items: center;
    gap: 3px;
    padding-left: 3px;
    margin-right: 3px;
    background-color: #2a2a2a;
    border-radius: 3px;
    color: #707070;
}

.vc-icon {
    width: 15px;
    height: 11px;
    display: flex;
    align-items: center;
    justify-content: center;
    color: #b0b0b0;
    border-right: 1px solid #333;
}

.vc-upgrade {
    width: 51px;
    text-align: center;
    white-space: nowrap;
}

.vc-gear {
    width: 15px;
    border-right: none;
    border-left: 1px solid #333;
}

.vc-band {
    height: 13px;
    flex: none;
    background-color: #3c3c3c;
    border-bottom: 1px solid #2a2a2a;
}

.vc-head,
.vc-row {
    display: grid;
    grid-template-columns: 1038px 260px 1fr;
    align-items: center;
    white-space: nowrap;
}

.vc-head {
    height: 16px;
    flex: none;
    background-color: #383838;
    padding-top: 3px;
    padding-right: 8px;
    color: #8a8a8a;
}

.cell-name {
    display: flex;
    align-items: center;
    padding-left: 10px;
}

.cell-status {
    position: relative;
}

.sort-mark {
    position: absolute;
    left: -11px;
    top: -3px;
    font-size: 4px;
}

.vc-head .cell-status {
    border-left: 1px solid #555;
    margin-left: -3px;
    padding-left: 2px;
    height: 12px;
    display: flex;
    align-items: center;
}

.vc-head .cell-date {
    margin-left: -1px;
}

.cb {
    width: 8px;
    height: 8px;
    flex: none;
    display: flex;
    align-items: center;
    justify-content: center;
    background-color: #222;
    border-radius: 1px;
    margin-right: 4px;
}

.cb-dash {
    width: 4px;
    height: 1px;
    background-color: #e0e0e0;
}

.dim {
    color: #7c7c7c;
}

.vc-table {
    height: 106px;
    flex: none;
    display: flex;
    background-color: #333;
    overflow: hidden;
}

.vc-rows {
    width: 1558px;
    flex: none;
}

.vc-row {
    height: 14.300px;
}

.vc-group {
    height: 14px;
    background-color: #353535;
}

.vc-group-plain {
    background-color: transparent;
    height: 14.400px;
}

.vc-group .cell-name {
    padding-left: 3px;
}

.vc-group .fold {
    margin-right: 2px;
}

.vc-group .cb {
    margin-right: 4px;
}

.vc-item .cell-name {
    padding-left: 19px;
}

.vc-item .cb {
    margin-right: 5px;
}

.vc-selected {
    background-color: #4a4a4a;
}

.file-ico {
    width: 9px;
    height: 10px;
    margin-right: 4px;
    display: flex;
    align-items: center;
    position: relative;
}

.badge {
    position: absolute;
    right: -2px;
    top: -1px;
    width: 3px;
    height: 3px;
    background-color: #1fc15a;
}

.badge-purple {
    background: none;
    border: 1px solid #8e78e0;
}

.vscroll {
    flex: 1;
    position: relative;
    color: #b0b0b0;
}

.vs-up {
    position: absolute;
    left: 1px;
    top: 3px;
    transform: rotate(180deg);
}

.vs-down {
    position: absolute;
    left: 1px;
    bottom: 4px;
}

.vs-thumb {
    position: absolute;
    left: 1px;
    right: 1px;
    top: 10px;
    height: 57px;
    background-color: #5f5f5f;
    border-radius: 3px;
}

.hscroll {
    height: 7px;
    flex: none;
    display: flex;
    align-items: center;
    background-color: #333;
    color: #b0b0b0;
    padding-left: 3px;
}

.hs-thumb {
    width: 1392px;
    height: 6px;
    margin-left: 3px;
    background-color: #5f5f5f;
    border-radius: 3px;
}

.hs-right {
    margin-left: 148px;
}

.vc-comment {
    height: 45px;
    flex: none;
    display: flex;
    align-items: center;
    border-top: 1px solid #232323;
    background-color: #3c3c3c;
    padding-left: 4px;
}

.avatar {
    margin-right: 4px;
}

.comment-box {
    width: 344px;
    height: 32px;
    padding: 4px 4px;
    background-color: #2a2a2a;
    border-radius: 2px;
    color: #6e6e6e;
}

.vc-btn {
    height: 10px;
    display: flex;
    align-items: center;
    justify-content: center;
    background-color: #535353;
    color: #c0c0c0;
    border-radius: 1px;
    white-space: nowrap;
}

.vc-btn-checkin {
    width: 74px;
    margin-left: 3px;
}

.vc-btn-undo {
    width: 26px;
    margin-left: 4px;
}

.vc-btn-more {
    width: 9px;
    margin-left: 1px;
}

.vc-notice {
    height: 14px;
    flex: none;
    display: flex;
    align-items: center;
    margin-top: 1px;
    padding-left: 5px;
    background-color: #333;
    white-space: nowrap;
}

.link {
    color: #5f9ee0;
}

.link-dash {
    margin-left: 4px;
}

.notice-right {
    margin-left: auto;
}

.link-mail {
    margin-left: 4px;
}

.notice-close {
    margin: 0 7px 0 6px;
    color: #8a8a8a;
    font-size: 9px;
}

.vc-footer {
    flex: 1;
    display: flex;
    align-items: center;
    justify-content: space-between;
    background-color: #282828;
    padding: 0 3px 0 2px;
}

.vc-btn-hide {
    width: 63px;
    height: 10px;
}

.branch {
    display: flex;
    align-items: center;
    gap: 3px;
}

/* inspector */
.inspector {
    flex: 1;
    margin-left: 1px;
    background-color: #383838;
}

.tab-inspector {
    width: 56px;
    gap: 3px;
    padding-left: 5px;
}

/* status bar */
.statusbar {
    height: 14px;
    flex: none;
    display: flex;
    align-items: center;
    justify-content: flex-end;
    gap: 4.500px;
    padding-right: 4px;
    background-color: #191919;
}
```
